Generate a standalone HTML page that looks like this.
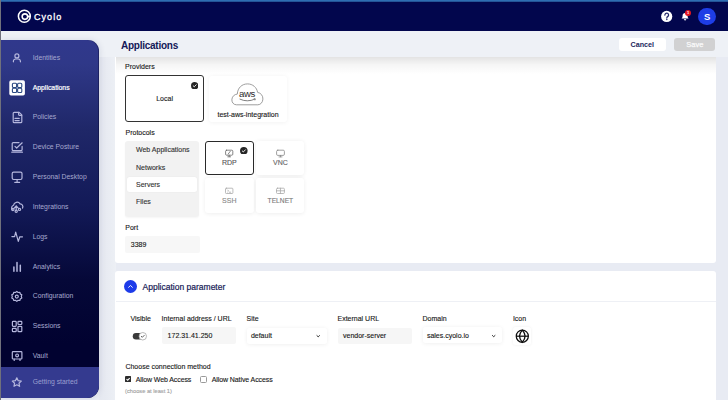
<!DOCTYPE html>
<html><head><meta charset="utf-8">
<style>
*{margin:0;padding:0;box-sizing:border-box}
html,body{width:728px;height:400px;overflow:hidden}
body{position:relative;background:#e8ebf3;font-family:"Liberation Sans",sans-serif;color:#222}
.abs{position:absolute}
#topline{left:0;top:0;width:728px;height:2px;background:linear-gradient(#2e6db2 0,#2e6db2 50%,#1b3a7c 100%)}
#header{left:0;top:2px;width:728px;height:29px;background:#02064d}
#leftline{left:0;top:0;width:1px;height:400px;background:#70717c;z-index:50}
#titlebar{left:0;top:31px;width:728px;height:26px;background:#eef1f6;z-index:5}
#sidebar{left:0;top:40px;width:99px;height:358.3px;border-radius:0 11px 12px 0;overflow:hidden;
 background:linear-gradient(180deg,#30388c 0%,#2f3888 6.7%,#1f2768 25%,#131a58 46%,#050838 67%,#010230 85%,#010230 100%);z-index:10;box-shadow:1px 0 6px rgba(20,30,90,.10),inset -1px 0 0 rgba(0,0,40,.35)}
.nt{position:absolute;left:32.7px;font-size:6.85px;line-height:10px;white-space:nowrap;color:#a6a8cf}
.nt.act{color:#fff;-webkit-text-stroke:0.2px #fff}
.nt.gst{color:#9b9fd0}
#gs{left:0;top:326.5px;width:99px;height:32px;background:#343a8f}
.card{position:absolute;background:#fff;border-radius:3px}
.lbl{position:absolute;font-size:7px;line-height:10px;white-space:nowrap;color:#181818;-webkit-text-stroke:0.12px currentColor}
</style></head><body>
<div id="topline" class="abs"></div>
<div id="header" class="abs">
  <svg class="abs" style="left:0;top:-2px" width="40" height="31" viewBox="0 0 40 31" fill="none" stroke="#fff" stroke-width="1.55">
    <circle cx="24.35" cy="16.25" r="5.95"/>
    <circle cx="24.9" cy="16.6" r="2.75"/><path d="M27.2 16.5L30.4 16.5" stroke-width="1.9"/>
  </svg>
  <div class="abs" style="left:34px;top:8.6px;font-size:9px;line-height:12px;color:#fff;letter-spacing:1.05px;-webkit-text-stroke:0.3px #fff">Cyolo</div>
  <svg class="abs" style="left:656px;top:4px" width="20" height="20" viewBox="656 6 20 20"><circle cx="666.7" cy="16.45" r="5.6" fill="#fff"/><path d="M664.9 15.1A1.85 1.85 0 1 1 667.9 16.4C667.1 16.9 666.8 17.3 666.8 18.1" stroke="#22266a" stroke-width="1.25" fill="none" stroke-linecap="round"/><circle cx="666.8" cy="19.6" r="0.75" fill="#22266a"/></svg>
  <svg class="abs" style="left:676px;top:4px" width="20" height="20" viewBox="676 6 20 20">
    <path d="M681.6 18.4C682.5 17.6 682.6 16.6 682.6 15.4C682.6 13.9 683.6 12.9 685.1 12.9C686.6 12.9 687.6 13.9 687.6 15.4C687.6 16.6 687.7 17.6 688.6 18.4Z" fill="#fff"/>
    <path d="M684.3 19.2Q685.1 20.6 685.9 19.2" stroke="#fff" stroke-width="1.1" fill="none"/>
  </svg>
  <div class="abs" style="left:685px;top:8.3px;width:6px;height:6px;border-radius:50%;background:#e3161f;color:#fff;font-size:4px;line-height:6px;text-align:center;font-weight:bold">1</div>
  <div class="abs" style="left:698.4px;top:5.6px;width:17.7px;height:17.7px;border-radius:50%;background:#1e3de6;color:#fff;font-size:9.5px;font-weight:bold;line-height:17.9px;text-align:center">S</div>
</div>
<div id="leftline" class="abs"></div>
<div id="titlebar" class="abs">
  <div class="abs" style="left:121px;top:8.6px;font-size:10px;font-weight:bold;color:#141858;letter-spacing:-0.25px;line-height:12px">Applications</div>
  <div class="abs" style="left:618.8px;top:7px;width:47px;height:13.2px;border-radius:3px;background:#fff;color:#1a1f5c;font-size:7.2px;font-weight:bold;line-height:13.2px;text-align:center">Cancel</div>
  <div class="abs" style="left:674.2px;top:7px;width:41.3px;height:13.2px;border-radius:3px;background:#d1d1d2;color:#fafafa;font-size:7.5px;-webkit-text-stroke:0.25px #fafafa;line-height:13.2px;text-align:center">Save</div>
</div>
<div id="sidebar" class="abs">
  <div id="gs" class="abs"></div>
  <svg class="abs" style="left:0;top:0" width="99" height="358" viewBox="0 40 99 358" fill="none" stroke="#b5b7dd" stroke-width="1.2" stroke-linecap="round" stroke-linejoin="round">
    <!-- identities -->
    <circle cx="16.9" cy="55.9" r="2"/>
    <path d="M13.4 61.8v-0.6a2.2 2.2 0 0 1 2.2-2.2h2.6a2.2 2.2 0 0 1 2.2 2.2v0.6"/>
    <!-- applications box -->
    <rect x="9.3" y="80.2" width="15.6" height="15.3" rx="1.8" fill="#fff" stroke="none"/>
    <g stroke="#2c4a82" stroke-width="1.1">
      <rect x="12.4" y="83.3" width="4.2" height="4.2" rx="1"/>
      <rect x="17.6" y="83.3" width="4.2" height="4.2" rx="1"/>
      <rect x="12.4" y="88.3" width="4.2" height="4.2" rx="1"/>
      <rect x="17.6" y="88.3" width="4.2" height="4.2" rx="1"/>
    </g>
    <!-- policies -->
    <path d="M19.2 112.3h-5a1 1 0 0 0-1 1v8.4a1 1 0 0 0 1 1h6.6a1 1 0 0 0 1-1v-6.8z"/>
    <path d="M18.6 112.4v2.2a0.8 0.8 0 0 0 0.8 0.8h2.2"/>
    <path d="M15 118.4h4.2M15 120.6h4.2"/>
    <!-- device posture -->
    <path d="M19 142.6h-5.8a1 1 0 0 0-1 1v6a1 1 0 0 0 1 1h7.9a1 1 0 0 0 1-1v-3.2"/>
    <path d="M11.8 152.2h10.6"/>
    <path d="M15 146.4l1.7 1.6 5.5-5.2"/>
    <!-- personal desktop -->
    <rect x="12.2" y="172.1" width="9.8" height="7.4" rx="1.4"/>
    <path d="M17.1 179.6v2.6M14.8 182.4h4.8"/>
    <!-- integrations --><g transform="translate(-0.7,-0.8)">
    <path d="M13.5 211.4a3 3 0 0 1-1.2-2.5a3 3 0 0 1 1.9-2.8a3.6 3.6 0 0 1 6.6-1.4a2.8 2.8 0 0 1 2.4 4.2"/>
    <circle cx="13.6" cy="210.2" r="1.1"/><circle cx="16.9" cy="212" r="1.1"/><circle cx="20.2" cy="210.2" r="1.1"/>
    <path d="M16.9 210.9v-4.2M14.4 209.5l2.5-2.8l2.5 2.8"/></g>
    <!-- logs -->
    <path d="M11.9 236.6h2.7l1.1-4.4l2.6 9.2l1.5-4.6h2.7"/>
    <!-- analytics -->
    <path d="M13.9 267v4.3M17 262.5v8.8M20.3 265.2v6.1" stroke-width="1.5"/>
    <!-- configuration -->
    <path d="M16.8 291.4l1.3 1.1l1.7-0.2l0.5 1.6l1.5 0.9l-0.5 1.6l0.5 1.6l-1.5 0.9l-0.5 1.6l-1.7-0.2l-1.3 1.1l-1.3-1.1l-1.7 0.2l-0.5-1.6l-1.5-0.9l0.5-1.6l-0.5-1.6l1.5-0.9l0.5-1.6l1.7 0.2z"/>
    <circle cx="16.8" cy="296.6" r="1.5"/>
    <!-- sessions -->
    <rect x="12.4" y="321.3" width="3.8" height="5" rx="0.8"/>
    <rect x="18" y="321.3" width="3.8" height="3.2" rx="0.8"/>
    <rect x="12.4" y="328.3" width="3.8" height="3.4" rx="0.8"/>
    <rect x="18" y="326.3" width="3.8" height="5.4" rx="0.8"/>
    <!-- vault -->
    <rect x="12.3" y="351.6" width="9.6" height="7.4" rx="0.8"/>
    <circle cx="17.1" cy="355.4" r="1.4"/>
    <path d="M14.2 359.2v1.2M20 359.2v1.2"/>
    <!-- star -->
    <path d="M16.8 377.8l1.4 2.9l3.1 0.4l-2.3 2.1l0.6 3.1l-2.8-1.5l-2.8 1.5l0.6-3.1l-2.3-2.1l3.1-0.4z"/>
  </svg>
  <span class="nt" style="top:12.9px">Identities</span>
  <span class="nt act" style="top:42.9px">Applications</span>
  <span class="nt" style="top:72.4px">Policies</span>
  <span class="nt" style="top:102.4px">Device Posture</span>
  <span class="nt" style="top:132.2px">Personal Desktop</span>
  <span class="nt" style="top:162.2px">Integrations</span>
  <span class="nt" style="top:191.9px">Logs</span>
  <span class="nt" style="top:221.5px">Analytics</span>
  <span class="nt" style="top:251.3px">Configuration</span>
  <span class="nt" style="top:281.1px">Sessions</span>
  <span class="nt" style="top:310.7px">Vault</span>
  <span class="nt gst" style="top:337.3px">Getting started</span>
</div>
<div class="abs" style="left:99px;top:57px;width:17px;height:343px;background:linear-gradient(90deg,#e5e8f0,#e8ebf2 45%,#edf0f5)"></div>
<div class="card" style="left:115.3px;top:50px;width:600.9px;height:212.5px"></div>
<div class="abs" style="left:116px;top:57px;width:600px;height:17px;background:linear-gradient(rgba(0,0,0,.11),rgba(0,0,0,.04) 45%,rgba(0,0,0,0))"></div>
<div class="card" style="left:115.3px;top:271px;width:600.9px;height:140px"></div>
<div class="lbl" style="left:125.1px;top:61.80px;">Providers</div>
<div class="abs" style="left:125.1px;top:75.3px;width:79px;height:47px;border:1.2px solid #333;border-radius:3px;background:#fff"></div>
<svg class="abs" style="left:190.60px;top:81.50px" width="7.4" height="7.4" viewBox="0 0 10 10"><circle cx="5" cy="5" r="5" fill="#262626"/><path d="M3 5.2l1.4 1.3l2.7-2.8" stroke="#fff" stroke-width="1.2" fill="none" stroke-linecap="round" stroke-linejoin="round"/></svg>
<div class="lbl" style="left:125.1px;top:93.6px;width:79px;text-align:center">Local</div>
<div class="abs" style="left:209px;top:76px;width:78px;height:45.7px;border-radius:3px;background:#fff;box-shadow:0 0.5px 4px rgba(0,0,0,.05)"></div>
<svg class="abs" style="left:228px;top:80px" width="38" height="28" viewBox="228 80 38 28" fill="none">
  <path d="M236.5 104.8C233.2 104.8 231.6 102 231.9 99.2C232.3 96.3 234.5 94.3 237.3 94.1C237.6 87.8 242 83.9 247.5 83.9C252.8 83.9 256.8 87.5 257.6 92.4C260.8 92.8 263.1 95.8 262.9 99.1C262.7 102.4 260.6 104.8 257.8 104.8Z" stroke="#8c8c8c" stroke-width="0.85"/>
  <path d="M239.6 99Q247.2 102.6 255.2 99" stroke="#555" stroke-width="0.75"/>
  <path d="M253.7 98.5L255.4 98.9L254.9 100.4" stroke="#555" stroke-width="0.6"/>
</svg>
<div class="abs" style="left:228px;top:88.8px;width:38px;text-align:center;font-size:9.6px;line-height:10px;color:#2a2a2a;letter-spacing:-0.35px">aws</div>
<div class="lbl" style="left:209px;top:109.5px;width:78px;text-align:center">test-aws-integration</div>
<div class="lbl" style="left:125.5px;top:127.75px;">Protocols</div>
<div class="abs" style="left:124.8px;top:140.8px;width:74.5px;height:76.2px;border-radius:3px;background:#f2f2f2;box-shadow:0 1px 2px rgba(0,0,0,.04)"></div>
<div class="abs" style="left:127.3px;top:177px;width:70.2px;height:15px;border-radius:2.5px;background:#fff;box-shadow:0 0 2px rgba(0,0,0,.06)"></div>
<div class="lbl" style="left:136px;top:145.25px;color:#333">Web Applications</div>
<div class="lbl" style="left:136px;top:162.50px;color:#333">Networks</div>
<div class="lbl" style="left:136px;top:179.50px;color:#333">Servers</div>
<div class="lbl" style="left:136px;top:196.50px;color:#333">Files</div>
<div class="abs" style="left:205px;top:141px;width:48.6px;height:34.4px;border:1.2px solid #2a2a2a;border-radius:3px;background:#fff"></div>
<div class="abs" style="left:256.4px;top:141px;width:48px;height:34.4px;border-radius:3px;background:#fff;box-shadow:0 0.5px 4px rgba(0,0,0,.065)"></div>
<div class="abs" style="left:205px;top:178.4px;width:48.6px;height:34.2px;border-radius:3px;background:#fff;box-shadow:0 0.5px 4px rgba(0,0,0,.065)"></div>
<div class="abs" style="left:256.4px;top:178.4px;width:48px;height:34.2px;border-radius:3px;background:#fff;box-shadow:0 0.5px 4px rgba(0,0,0,.065)"></div>
<svg class="abs" style="left:240.20px;top:146.50px" width="7.6" height="7.6" viewBox="0 0 10 10"><circle cx="5" cy="5" r="5" fill="#262626"/><path d="M3 5.2l1.4 1.3l2.7-2.8" stroke="#fff" stroke-width="1.2" fill="none" stroke-linecap="round" stroke-linejoin="round"/></svg>
<div class="lbl" style="left:205px;top:157.7px;width:48.6px;text-align:center;color:#555">RDP</div>
<div class="lbl" style="left:256.4px;top:157.7px;width:48px;text-align:center;color:#666">VNC</div>
<div class="lbl" style="left:205px;top:195.9px;width:48.6px;text-align:center;color:#8a8a8a">SSH</div>
<div class="lbl" style="left:256.4px;top:195.9px;width:48px;text-align:center;color:#7a7a7a;font-size:6.7px">TELNET</div>
<svg class="abs" style="left:200px;top:140px" width="110" height="75" viewBox="200 140 110 75" fill="none" stroke-linecap="round" stroke-linejoin="round">
  <g stroke="#666" stroke-width="0.8"><rect x="225.6" y="150.2" width="7.2" height="5" rx="1"/><path d="M229.2 155.2v1.5M227.8 156.8h2.8M228.2 154l2-2.6"/></g>
  <g stroke="#888" stroke-width="0.8"><rect x="276.6" y="150.2" width="7.8" height="5.2" rx="1.2"/><path d="M280.5 155.4v1.4M279 156.9h3"/></g>
  <g stroke="#aaa" stroke-width="0.8"><rect x="225.5" y="188.2" width="7.4" height="5.3" rx="0.8"/><path d="M227.6 190l1 1-1 1M229.3 192.2h1.4"/></g>
  <g stroke="#aaa" stroke-width="0.8"><rect x="276.5" y="188.2" width="7.9" height="5.3" rx="1"/><path d="M276.5 190.8h7.9M280.45 188.2v5.3"/></g>
</svg>
<div class="lbl" style="left:125.3px;top:223.3px;">Port</div>
<div class="abs" style="left:125.3px;top:235.9px;width:74.5px;height:16.7px;border-radius:2px;background:#f7f7f7"></div>
<div class="lbl" style="left:130.8px;top:240.2px;">3389</div>
<svg class="abs" style="left:124px;top:279.5px" width="13" height="13" viewBox="0 0 13 13"><circle cx="6.5" cy="6.5" r="6.5" fill="#1d3be9"/><path d="M4.6 7.3L6.5 5.5L8.4 7.3" stroke="#fff" stroke-width="0.9" fill="none" stroke-linecap="round" stroke-linejoin="round"/></svg>
<div class="abs" style="left:142.6px;top:280.6px;font-size:8.5px;line-height:12px;color:#161a56;white-space:nowrap;-webkit-text-stroke:0.2px #161a56">Application parameter</div>
<div class="abs" style="left:116px;top:300.5px;width:600px;height:1px;background:#eef0f5"></div>
<div class="lbl" style="left:130.4px;top:313.70px;">Visible</div>
<div class="lbl" style="left:161.6px;top:313.70px;">Internal address / URL</div>
<div class="lbl" style="left:246.6px;top:313.70px;">Site</div>
<div class="lbl" style="left:337.5px;top:313.70px;">External URL</div>
<div class="lbl" style="left:422.5px;top:313.70px;">Domain</div>
<div class="lbl" style="left:512.9px;top:313.70px;">Icon</div>
<svg class="abs" style="left:126px;top:326px" width="26" height="20" viewBox="0 0 26 20"><rect x="6.75" y="7" width="10" height="6.5" rx="3.25" fill="#3a3a3a"/><circle cx="16.75" cy="10.25" r="3.75" fill="#fff" stroke="#9a9a9a" stroke-width="0.7"/><path d="M15.3 10.4l1 0.9l1.9-1.9" stroke="#333" stroke-width="0.8" fill="none" stroke-linecap="round"/></svg>
<div class="abs" style="left:161.6px;top:327.4px;width:74.4px;height:16.2px;border-radius:2px;background:#f6f6f6"></div>
<div class="lbl" style="left:167.6px;top:330.60px;">172.31.41.250</div>
<div class="abs" style="left:246.6px;top:327.8px;width:80px;height:16.3px;border-radius:2.5px;background:#fff;box-shadow:0 0.5px 4px rgba(0,0,0,.07)"></div>
<div class="lbl" style="left:250.9px;top:331.00px;">default</div>
<div class="abs" style="left:337.5px;top:327.5px;width:74px;height:16px;border-radius:2px;background:#f6f6f6"></div>
<div class="lbl" style="left:343px;top:330.70px;">vendor-server</div>
<div class="abs" style="left:422.5px;top:327.1px;width:79px;height:16.4px;border-radius:2.5px;background:#fff;box-shadow:0 0.5px 4px rgba(0,0,0,.07)"></div>
<div class="lbl" style="left:426.9px;top:331.0px;">sales.cyolo.io</div>
<svg class="abs" style="left:240px;top:320px" width="270" height="30" viewBox="240 320 270 30" fill="none" stroke="#222" stroke-width="0.95" stroke-linecap="round" stroke-linejoin="round"><path d="M316.9 335.6l1.3 1.2l1.3-1.2"/><path d="M492.4 335.5l1.3 1.2l1.3-1.2"/></svg>
<div class="abs" style="left:512.9px;top:327px;width:18.6px;height:18.4px;border-radius:2.5px;background:#fff;box-shadow:0 0 3px rgba(0,0,0,.07)"></div>
<svg class="abs" style="left:514px;top:328px" width="16" height="16" viewBox="514 328 16 16" fill="none" stroke="#0d0d0d" stroke-width="1.25"><circle cx="522.3" cy="336.2" r="6.05"/><path d="M522.3 330.15Q516.7 336.2 522.3 342.25Q527.9 336.2 522.3 330.15Z"/><path d="M516.3 336.2h12"/></svg>
<div class="lbl" style="left:125.4px;top:361.60px;">Choose connection method</div>
<svg class="abs" style="left:125.1px;top:376.3px" width="6.2" height="6.2" viewBox="0 0 6.2 6.2"><rect width="6.2" height="6.2" rx="1" fill="#2e2e2e"/><path d="M1.5 3.1l1.2 1.1l2-2.1" stroke="#fff" stroke-width="1.05" fill="none"/></svg>
<div class="lbl" style="left:135.8px;top:374.70px;letter-spacing:-0.1px">Allow Web Access</div>
<div class="abs" style="left:200.3px;top:376.3px;width:6.9px;height:6.9px;border:0.9px solid #9a9a9a;border-radius:1.5px;background:#fff"></div>
<div class="lbl" style="left:211.8px;top:374.70px;letter-spacing:-0.1px">Allow Native Access</div>
<div class="lbl" style="left:125.1px;top:386.5px;font-size:5.7px;line-height:8px;color:#a0a0a0">(choose at least 1)</div>
</body></html>
